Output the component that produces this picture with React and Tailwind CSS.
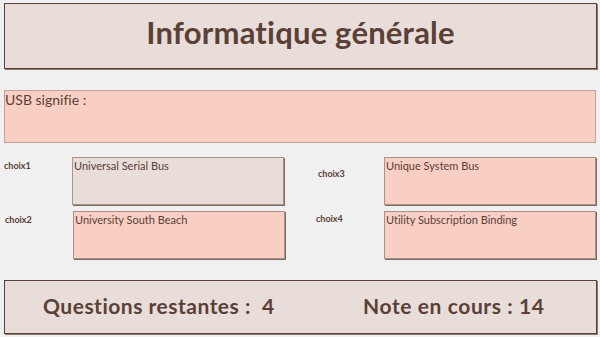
export default function App() {
  const font = { fontFamily: 'Lato, "Open Sans", sans-serif' };
  return (
    <div className="w-[600px] h-[337px] bg-[#f0f0f0] text-[#5a4036] overflow-hidden [font-variant-ligatures:none]" style={font}>
      <div className="pt-[3px] pl-[4px] pr-[3px]">
        <div className="h-[66px] bg-[#e8ddd8] border border-[#5a4036] shadow-[1px_1px_0_#8a7a74] flex items-center justify-center">
          <h1 className="text-[31px] font-bold tracking-[0.2px] leading-none pb-[7px]">Informatique générale</h1>
        </div>
      </div>
      <div className="pt-[21px] pl-[4px] pr-[4px]">
        <div className="h-[53px] bg-[#f9cfc3] border border-[#c4a29a] px-0">
          <p className="text-[14px] leading-[18px]">USB signifie :</p>
        </div>
      </div>
      <div className="pt-[14px] pl-[4px] pr-[4px] flex flex-col gap-[6px]">
        <div className="flex">
          <div className="w-[68px] text-[9px] font-bold pt-[2px]">choix1</div>
          <Box bg="bg-[#e8ddd8]" text="Universal Serial Bus" />
          <div className="w-[100px] text-[9px] font-bold pt-[10px] pl-[34px]">choix3</div>
          <Box bg="bg-[#f9cfc3]" text="Unique System Bus" />
        </div>
        <div className="flex">
          <div className="w-[69px] text-[9px] font-bold pt-[2px] pl-[1px]">choix2</div>
          <Box bg="bg-[#f9cfc3]" text="University South Beach" />
          <div className="w-[99px] text-[9px] font-bold pt-[1px] pl-[31px]">choix4</div>
          <Box bg="bg-[#f9cfc3]" text="Utility Subscription Binding" />
        </div>
      </div>
      <div className="pt-[21px] pl-[4px] pr-[3px]">
        <div className="h-[54px] bg-[#e8ddd8] border border-[#5a4036] shadow-[1px_1px_0_#8a7a74] flex items-center text-[21px] font-bold pb-[3px]">
          <span className="pl-[38px] w-[257px] tracking-[0.5px]">Questions restantes :</span>
          <span className="w-[101px]">4</span>
          <span className="tracking-[0.6px]">Note en cours : 14</span>
        </div>
      </div>
    </div>
  );
}

function Box({ bg, text }) {
  return (
    <div className={`w-[212px] h-[48px] ${bg} border border-[#a8928a] shadow-[1px_1px_0_#7a6a64] px-[1px] text-[11px] leading-[15px]`}>
      {text}
    </div>
  );
}
